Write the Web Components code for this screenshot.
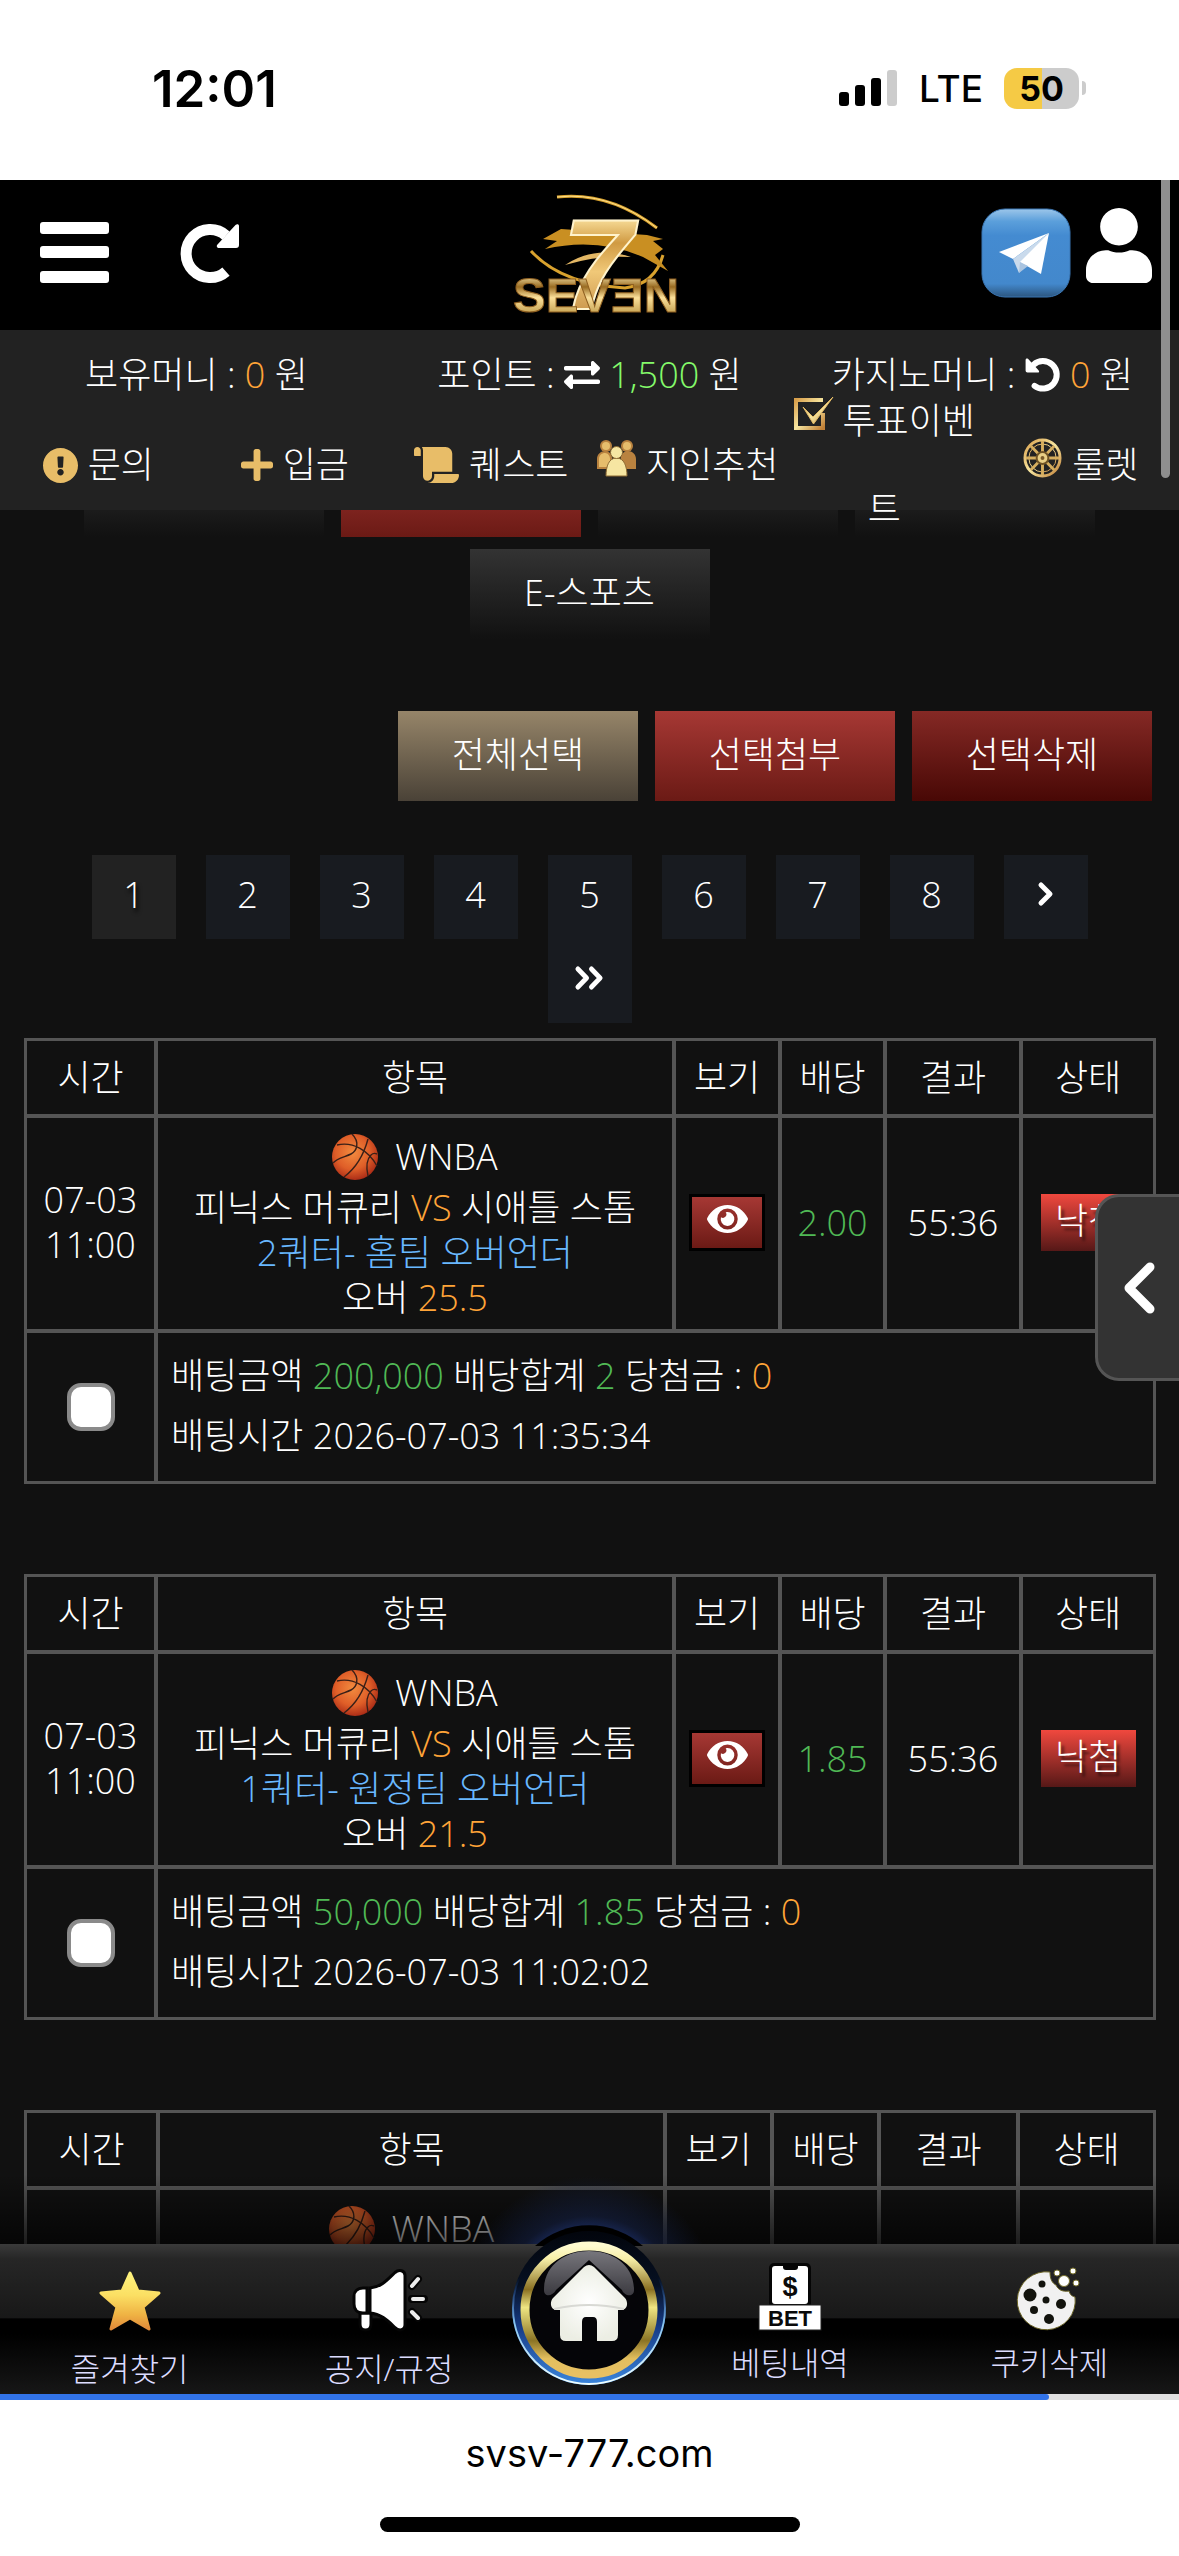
<!DOCTYPE html>
<html lang="ko">
<head>
<meta charset="utf-8">
<meta name="viewport" content="width=device-width, initial-scale=1">
<title>SEVEN</title>
<style>
  html, body { margin: 0; background: #fff; }
  body {
    font-family: "Open Sans", "Noto Sans CJK KR", sans-serif;
    font-weight: 300; font-size: 36px; color: #fff;
    --line: #555; --page: #111; --bar: #222;
    --amber: #ffa438; --green: #50b955; --sky: #69b8ff;
  }
</style>
</head>
<body>
<app-screen></app-screen>

<script>
const define = (name, html, setup) => {
  const tpl = document.createElement('template');
  tpl.innerHTML = html;
  customElements.define(name, class extends HTMLElement {
    constructor() {
      super();
      this.attachShadow({ mode: 'open' }).append(tpl.content.cloneNode(true));
    }
    connectedCallback() { if (setup) setup(this, this.shadowRoot); }
  });
};

/* ---------- icons ---------- */
const GOLD = `<defs><linearGradient id="g" x1="0" x2="1" y1="0" y2="1"><stop offset="0" stop-color="#d9a04c"/><stop offset=".5" stop-color="#f7e6a0"/><stop offset="1" stop-color="#c07f36"/></linearGradient></defs>`;
const ICONS = {
  bars: ['0 0 69 61', '<g fill="#fff"><rect width="69" height="12" rx="3"/><rect y="24" width="69" height="12" rx="3"/><rect y="49" width="69" height="12" rx="3"/></g>'],
  redo: ['0 0 60 60', '<path d="M45 12.500A24 24 0 1 0 45 48.500" fill="none" stroke="#fff" stroke-width="11"/><path d="M58 3v19a3 3 0 0 1-3 3H38c-2 0-3-2-1.500-3.500l18-19.500C56 .5 58 1 58 3z" fill="#fff"/>'],
  undo: ['0 0 60 60', '<path d="M14 13A23 23 0 1 1 16 48" fill="none" stroke="#fff" stroke-width="10" stroke-linecap="round"/><path d="M1 5v18a3 3 0 0 0 3 3h17c2.500 0 3.500-2 1.500-4L5 3C3 1.500 1 2.500 1 5z" fill="#fff"/>'],
  user: ['0 0 448 512', '<path fill="#fff" d="M224 256c70.7 0 128-57.3 128-128S294.7 0 224 0 96 57.3 96 128s57.3 128 128 128zm89.6 32h-16.7c-22.2 10.2-46.9 16-72.9 16s-50.600-5.800-72.900-16h-16.700C60.200 288 0 348.200 0 422.400V464c0 26.500 21.500 48 48 48h352c26.500 0 48-21.500 48-48v-41.600c0-74.200-60.200-134.400-134.400-134.400z"/>'],
  telegram: ['0 0 90 90', `<defs><linearGradient id="t" x1="0" x2="0" y1="0" y2="1"><stop offset="0" stop-color="#9cc6ea"/><stop offset=".14" stop-color="#5b9fdb"/><stop offset=".3" stop-color="#448bd1"/><stop offset=".85" stop-color="#4388cc"/><stop offset="1" stop-color="#2c567f"/></linearGradient></defs><rect x="1" y="1" width="88" height="88" rx="23" fill="url(#t)" stroke="#3a76b4"/><path d="M68 25L18 44l14 7z" fill="#fff"/><path d="M68 25L32 51l6 14z" fill="#c9daec"/><path d="M68 25L39 54l21 12z" fill="#fff"/><path d="M39 54l-1 11 9-7z" fill="#aac4e0"/>`],
  exchange: ['0 0 512 512', '<path fill="#fff" d="M0 168v-16c0-13.255 10.745-24 24-24h360V80c0-21.367 25.899-32.042 40.971-16.971l80 80c9.372 9.373 9.372 24.569 0 33.941l-80 80C409.956 271.982 384 261.456 384 240v-48H24c-13.255 0-24-10.745-24-24zm488 152H128v-48c0-21.314-25.862-32.080-40.971-16.971l-80 80c-9.372 9.373-9.372 24.569 0 33.941l80 80C102.057 463.997 128 453.437 128 432v-48h360c13.255 0 24-10.745 24-24v-16c0-13.255-10.745-24-24-24z"/>'],
  alert: ['8 8 496 496', '<path fill="#e8bd68" d="M504 256c0 136.997-111.043 248-248 248S8 392.997 8 256C8 119.083 119.043 8 256 8s248 111.083 248 248zm-248 50c-25.405 0-46 20.595-46 46s20.595 46 46 46 46-20.595 46-46-20.595-46-46-46zm-43.673-165.346l7.418 136c.347 6.364 5.609 11.346 11.982 11.346h48.546c6.373 0 11.635-4.982 11.982-11.346l7.418-136c.375-6.874-5.098-12.654-11.982-12.654h-63.383c-6.884 0-12.356 5.780-11.981 12.654z"/>'],
  plus: ['0 32 448 448', '<path fill="#e8bd68" d="M416 208H272V64c0-17.670-14.330-32-32-32h-32c-17.670 0-32 14.330-32 32v144H32c-17.670 0-32 14.330-32 32v32c0 17.670 14.330 32 32 32h144v144c0 17.670 14.330 32 32 32h32c17.670 0 32-14.330 32-32V304h144c17.670 0 32-14.330 32-32v-32c0-17.670-14.330-32-32-32z"/>'],
  scroll: ['0 0 640 512', '<path fill="#e8bd68" d="M48 0C21.530 0 0 21.530 0 48v64c0 8.840 7.160 16 16 16h80V48C96 21.530 74.470 0 48 0zm208 412.570V352h288V96c0-52.940-43.060-96-96-96H111.590C121.740 13.410 128 29.920 128 48v368c0 38.870 34.650 69.650 74.750 63.120C234.220 474 256 444.460 256 412.570zM288 384v32c0 52.930-43.060 96-96 96h336c61.860 0 112-50.140 112-112 0-8.840-7.160-16-16-16H288z"/>'],
  group: ['0 0 39 36', GOLD + '<g fill="#b9823f"><circle cx="9" cy="6" r="6"/><circle cx="30" cy="6" r="6"/><path d="M0 29V19c0-5 4-8 8-8s7 3 7 7v11zM39 29V19c0-5-4-8-8-8s-7 3-7 7v11z"/></g><g fill="#e6bd6c"><circle cx="9" cy="6" r="4"/><circle cx="30" cy="6" r="4"/><path d="M2 27v-8c0-4 3-6 6-6s5 3 5 6v8z"/></g><g fill="#f6e6a2" stroke="#8d6a33" stroke-width="1"><path d="M9 36c0-10 3-18 10.500-18S30 26 30 36z"/><circle cx="19.500" cy="12.500" r="6"/></g>'],
  vote: ['0 0 39 36', GOLD + '<path d="M29 4H2v28h27V17" fill="none" stroke="url(#g)" stroke-width="4"/><path d="M9 11l10 10L39 1 19.500 28z" fill="url(#g)" stroke="#e4bb66"/>'],
  wheel: ['0 0 40 40', GOLD + '<g fill="none" stroke="url(#g)"><circle cx="20" cy="20" r="18" stroke-width="3"/><circle cx="20" cy="20" r="14" stroke-width="1"/></g><path d="M20 3V37M3 20H37M8 8L32 32M32 8L8 32" stroke="#d6ae5e" stroke-width="3"/><circle cx="20" cy="20" r="6" fill="#e9cf85" stroke="#6f5324" stroke-width="2"/><circle cx="20" cy="20" r="2" fill="#7a5b29"/>'],
  eye: ['0 64 576 384', '<path fill="#fff" d="M572.520 241.400C518.290 135.590 410.930 64 288 64S57.680 135.640 3.480 241.410a32.350 32.350 0 0 0 0 29.190C57.710 376.410 165.070 448 288 448s230.320-71.640 284.520-177.410a32.350 32.350 0 0 0 0-29.190zM288 400a144 144 0 1 1 144-144 143.930 143.930 0 0 1-144 144zm0-240a95.310 95.310 0 0 0-25.310 3.790 47.850 47.850 0 0 1-66.900 66.900A95.780 95.780 0 1 0 288 160z"/>'],
  next: ['0 0 16 24', '<path d="M3 3l9 9-9 9" fill="none" stroke="#fff" stroke-width="5" stroke-linejoin="round" stroke-linecap="round"/>'],
  last: ['0 0 30 24', '<path d="M3 3l9 9-9 9M17 3l9 9-9 9" fill="none" stroke="#fff" stroke-width="5" stroke-linejoin="round" stroke-linecap="round"/>'],
  back: ['0 0 32 52', '<path d="M27 5L6 26l21 21" fill="none" stroke="#fff" stroke-width="9" stroke-linejoin="round" stroke-linecap="round"/>'],
  ball: ['0 0 46 46', '<defs><radialGradient id="b" cx=".45" cy=".4" r=".62"><stop offset="0" stop-color="#f28b3f"/><stop offset=".6" stop-color="#df5e28"/><stop offset="1" stop-color="#a82a16"/></radialGradient></defs><circle cx="23" cy="23" r="23" fill="url(#b)"/><g fill="none" stroke="#3a2018" stroke-width="1.400"><path d="M20 0c8 8 5 17-1 20S5 24 1 29M36 5C32 20 24 34 12 43M5 11c16-4 32 6 40 21M36 42c-2-9-1-17 3-21 2-2 4-2 6-1"/></g>'],
  star: ['0 0 62 60', '<defs><linearGradient id="s" x1="0" x2="0" y1="0" y2="1"><stop offset="0" stop-color="#fff47e"/><stop offset=".4" stop-color="#fbdf63"/><stop offset=".75" stop-color="#efb243"/><stop offset="1" stop-color="#e08a3a"/></linearGradient></defs><path fill="url(#s)" stroke="url(#s)" stroke-width="3" stroke-linejoin="round" d="M31 2l8 18 21 2-16 14 6 22-19-11-19 11 6-22L2 22l21-2z"/>'],
  horn: ['0 0 74 62', '<g stroke="#050505" stroke-width="3"><path d="M8 44h11v11c0 4-2 6-5.500 6S8 59 8 55z" fill="#fff"/><path d="M15 19H11C5 19 2 23 2 27v8c0 5 3 9 9 9h4z" fill="#fff"/><path d="M18 19C30 18 37 9 43 3.500c4-3.500 10-2 10 3v49c0 6-6 7-10 3C37 53 30 45 18 44z" fill="#fff"/></g><path d="M60 17l6-7M60 30h12M60 43l6 6" stroke="#050505" stroke-width="8" stroke-linecap="round"/><path d="M60 17l6-7M61 30h10M60 43l6 6" stroke="#ececec" stroke-width="4" stroke-linecap="round"/>'],
  bet: ['0 0 62 68', '<rect x="10" width="42" height="46" rx="5" fill="#050505"/><rect x="13" y="3" width="36" height="38" rx="3" fill="#fff"/><path d="M24 2h15v2c0 2-1 3-3 3h-9c-2 0-3-1-3-3z" fill="#050505"/><rect y="42" width="62" height="25" fill="#fff" stroke="#222"/><text x="31" y="33" font-family="Liberation Sans" font-weight="700" font-size="27" text-anchor="middle" fill="#0a0a0a">$</text><text x="31" y="63" font-family="Liberation Sans" font-weight="700" font-size="22" text-anchor="middle" fill="#0a0a0a">BET</text>'],
  cookie: ['0 0 64 64', '<path d="M33 5A29 29 0 1 0 58 30c-4-1-5-3-6-6-6 1-11-1-13-6-4-2-6-6-6-13z" fill="#f1f1f1" stroke="#6b6426" stroke-width="1"/><g fill="#fff" stroke="#77702c"><circle cx="47" cy="14" r="5.500"/><circle cx="40" cy="6" r="3"/><circle cx="56" cy="4" r="3"/><circle cx="59" cy="16" r="3"/></g><g fill="#12130d"><circle cx="13" cy="28" r="6.500"/><circle cx="25" cy="17" r="3.500"/><circle cx="29" cy="33" r="3.500"/><circle cx="44" cy="37" r="5"/><circle cx="17" cy="43" r="4"/><circle cx="32" cy="52" r="5"/></g>'],
  home: ['0 0 164 164', `<defs>
    <linearGradient id="o" x1="0" x2="0" y1="0" y2="1"><stop offset="0" stop-color="#02050c"/><stop offset=".35" stop-color="#061022"/><stop offset=".62" stop-color="#163b86"/><stop offset="1" stop-color="#3b86dd"/></linearGradient>
    <linearGradient id="r" x1="0" x2="0" y1="0" y2="1"><stop offset="0" stop-color="#fffbd0"/><stop offset=".1" stop-color="#f8f0a8"/><stop offset=".34" stop-color="#8a7022"/><stop offset=".48" stop-color="#efe682"/><stop offset=".74" stop-color="#8b7425"/><stop offset=".88" stop-color="#e3bf5e"/><stop offset="1" stop-color="#e8c063"/></linearGradient>
    <linearGradient id="e" x1="0" x2="0" y1="0" y2="1"><stop offset=".3" stop-color="#2a66c8" stop-opacity="0"/><stop offset=".6" stop-color="#86c4ee"/><stop offset="1" stop-color="#f0ffff"/></linearGradient>
    <linearGradient id="gl" x1="0" x2="0" y1="0" y2="1"><stop offset="0" stop-color="#77767c"/><stop offset="1" stop-color="#3b3a40"/></linearGradient>
    <radialGradient id="w"><stop offset="0" stop-color="#fff"/><stop offset="1" stop-color="#eceee4"/></radialGradient></defs>
    <path d="M28 20A81 81 0 0 1 136 20z" fill="#000"/><circle cx="82" cy="82" r="77" fill="url(#o)"/><circle cx="82" cy="82" r="76" fill="none" stroke="url(#e)" stroke-width="2"/>
    <circle cx="82" cy="84" r="64" fill="#050508" stroke="url(#r)" stroke-width="9"/>
    <path d="M37 64c0-52 90-52 90 0 0 8-10 6-12 0L82 34 49 64c-3 6-12 8-12 0z" fill="url(#gl)"/>
    <path d="M77 41q5-4 10 0l31 31c4 5 2 12-4 12h-3v25q0 6-6 6H90V96q0-5-4-5h-7q-4 0-4 5v19H59q-6 0-6-6V84h-3c-6 0-8-7-4-12z" fill="url(#w)"/><path d="M47 83q35-8 70 0" stroke="#d8d9d4" stroke-width="2" fill="none"/>`],
  signal: ['0 0 58 36', '<g fill="#000"><rect y="22" width="10" height="14" rx="3"/><rect x="16" y="15" width="10" height="21" rx="3"/><rect x="32" y="8" width="10" height="28" rx="3"/></g><rect x="48" width="10" height="36" rx="3" fill="#ccc"/>'],
  logo: ['0 0 170 124', `<defs>
    <linearGradient id="l7" x1="0" x2="0" y1="0" y2="1"><stop offset=".15" stop-color="#ffe9a8"/><stop offset=".35" stop-color="#d09a42"/><stop offset=".55" stop-color="#f0c878"/><stop offset="1" stop-color="#b57a33"/></linearGradient>
    <linearGradient id="ls" x1="0" x2="0" y1="0" y2="1"><stop offset=".1" stop-color="#fff0b8"/><stop offset=".35" stop-color="#9a6c22"/><stop offset=".55" stop-color="#fbe09a"/><stop offset="1" stop-color="#a8812c"/></linearGradient></defs>
    <g fill="none"><path d="M46 6q52-6 100 31" stroke="#d9a22e" stroke-width="3"/><path d="M46 6q52-6 100 31" stroke="#ffe08a" stroke-width="1"/><path d="M20 60q30 33 94 37 30-4 38-33" stroke="#d9a22e" stroke-width="3"/></g>
    <path d="M32 48l18-10 86 6 16 4-10 2 10 8-8 6 13 16-25-14q-46-20-98-8l12-8z" fill="#c98f22"/><path d="M54 74q30-20 66-8-34-2-66 8z" fill="#e3b765"/>
    <text x="51" y="118" font-family="Liberation Sans" font-style="italic" font-weight="700" font-size="128" fill="url(#l7)" stroke="#fff3cc" stroke-width="2">7</text>
    <text x="2" y="121" font-family="Liberation Sans" font-weight="700" font-size="49" fill="url(#ls)" stroke="#8f5f20" stroke-width="1">SEVƎN</text>`]
};
define('ui-icon', `<style>:host{display:inline-flex;flex:none} svg{display:block;width:100%;height:100%;overflow:visible}</style>`, (el, root) => {
  const [box, body] = ICONS[el.getAttribute('name')];
  const [w, h] = el.getAttribute('size').split(' ');
  el.style.width = w + 'px'; el.style.height = h + 'px';
  root.innerHTML += `<svg viewBox="${box}" preserveAspectRatio="none" aria-hidden="true">${body}</svg>`;
});

/* ---------- phone status bar ---------- */
define('status-bar', `<style>
  :host{display:flex;align-items:center;justify-content:space-between;height:180px;padding:0 93px 4px 152px;box-sizing:border-box;background:#fff;color:#000;font-family:Inter,sans-serif;flex:none}
  .time{font-size:51px;font-weight:600}
  .right{display:flex;align-items:center}
  .net{font-size:37px;font-weight:500;margin:0 21px 0 22px}
  .bat{width:75px;height:41px;border-radius:13px;background:linear-gradient(90deg,#f5ca45 51%,#ccc 51%);font-size:34px;font-weight:700;line-height:41px;text-align:center}
  .nub{width:4px;height:14px;margin-left:3px;border-radius:0 4px 4px 0;background:#ccc}
</style><span class="time">12:01</span><div class="right"><ui-icon name="signal" size="58 36"></ui-icon><span class="net">LTE</span><span class="bat">50</span><i class="nub"></i></div>`);

/* ---------- site header ---------- */
define('site-header', `<style>
  :host{display:flex;align-items:center;justify-content:space-between;height:150px;box-sizing:border-box;background:#000;padding:0 27px 5px;flex:none}
  div{display:flex;align-items:center;flex:1}
  .l{gap:72px;padding-left:13px} .r{justify-content:flex-end;align-items:flex-start;gap:15px}
  button,a{display:flex;border:0;padding:0;background:none}
</style>
<div class="l"><button aria-label="메뉴"><ui-icon name="bars" size="69 61"></ui-icon></button><button aria-label="새로고침"><ui-icon name="redo" size="60 60"></ui-icon></button></div>
<a href="#" aria-label="SEVEN"><ui-icon name="logo" size="170 124"></ui-icon></a>
<div class="r"><a href="#" aria-label="텔레그램"><ui-icon name="telegram" size="90 90"></ui-icon></a><a href="#" aria-label="내 정보"><ui-icon name="user" size="66 75"></ui-icon></a></div>`);

/* ---------- balances and quick links ---------- */
define('info-bar', `<style>
  :host{display:block;position:relative;z-index:2;height:180px;background:var(--bar);flex:none}
  .row{display:flex;height:90px;align-items:center}
  .row>*{flex:1 1 0;text-align:center;line-height:88px;color:#fff;text-decoration:none;white-space:nowrap}
  ui-icon{vertical-align:middle;margin-bottom:6px}
  b{font-weight:inherit;color:var(--amber)} b.g{color:#84fa6a}
  a ui-icon{margin-right:10px}
  a .hi{margin-bottom:20px}
</style>
<div class="row"><span>보유머니 : <b>0</b> 원</span><span>포인트 : <ui-icon name="exchange" size="36 36"></ui-icon> <b class="g">1,500</b> 원</span><span>카지노머니 : <ui-icon name="undo" size="36 36"></ui-icon> <b>0</b> 원</span></div>
<div class="row"><a href="#"><ui-icon name="alert" size="35 35"></ui-icon>문의</a><a href="#"><ui-icon name="plus" size="32 32"></ui-icon>입금</a><a href="#"><ui-icon name="scroll" size="45 36"></ui-icon>퀘스트</a><a href="#"><ui-icon class="hi" name="group" size="39 36"></ui-icon>지인추천</a><a href="#"><ui-icon class="hi" name="vote" size="39 36"></ui-icon>투표이벤<br>트</a><a href="#"><ui-icon class="hi" name="wheel" size="39 40"></ui-icon>룰렛</a></div>`);

/* ---------- gradient buttons ---------- */
define('tone-button', `<style>
  :host{display:block;width:240px;height:90px;--a:#333;--b:#111}
  :host([tone=red]){--a:#a63834;--b:#6b1a15}
  :host([tone=sand]){--a:#968569;--b:#4a4237}
  :host([tone=wine]){--a:#852925;--b:#480805}
  button{display:block;width:100%;height:100%;border:0;padding:0 0 8px;font:inherit;color:#fff;background:linear-gradient(var(--a),var(--b))}
</style><button><slot></slot></button>`);

/* ---------- pager ---------- */
define('page-list', `<style>
  :host{display:flex;flex-wrap:wrap;justify-content:center;column-gap:30px;padding:0 80px;margin-top:54px}
  a{width:84px;height:84px;display:flex;align-items:center;justify-content:center;padding-bottom:6px;box-sizing:border-box;background:#181b20;color:#fff;text-decoration:none}
  a[aria-current]{background:var(--bar);text-shadow:2px 4px 4px #000}
</style>`, (el, root) => {
  let links = '';
  for (let i = 1; i <= 8; i++) links += `<a href="#"${i === 1 ? ' aria-current="page"' : ''}>${i}</a>`;
  root.innerHTML += links + `<a href="#" aria-label="다음"><ui-icon name="next" size="16 24"></ui-icon></a><a href="#" aria-label="마지막"><ui-icon name="last" size="29 24"></ui-icon></a>`;
});

/* ---------- betting slip ---------- */
define('bet-slip', `<style>
  :host{display:block;margin:0 23px 90px 24px;line-height:45px}
  table{width:100%;table-layout:fixed;border-collapse:separate;border-spacing:2px;background:var(--line)}
  th,td{border:1px solid var(--line);background:var(--page);padding:0 0 3px;text-align:center;font-weight:inherit;box-sizing:border-box}
  th{height:75px;padding:0} .game td{height:213px} .sum td{height:150px} .sum .check{padding:0}
  .game .item{padding:0} .game .top{padding-top:10px;vertical-align:top}
  .sum .text{text-align:left;padding-left:13px;line-height:60px}
  .league{display:flex;align-items:flex-start;justify-content:center;gap:17px;height:46px;padding:6px 0 5px}
  b,i,em{font-weight:inherit;font-style:normal}
  b{color:var(--amber)} i{color:var(--sky)} em{color:var(--green)}
  button{display:inline-flex;align-items:flex-start;justify-content:center;vertical-align:middle;width:76px;height:57px;padding:8px 0 0;border:3px solid #000;background:linear-gradient(#a63834,#6b1a15)}
  .state{display:inline-block;width:95px;height:57px;line-height:54px;vertical-align:middle;background:linear-gradient(#f0483e,#561817);text-shadow:3px 4px 3px #0009}
  label{display:flex;justify-content:center}
  input{appearance:none;margin:0;width:48px;height:48px;border:4px solid #8a8a8a;border-radius:14px;background:#fff}
</style>`, (el, root) => {
  const a = n => el.getAttribute(n) || '';
  const cols = a('cols').split(' ').map(w => `<col${w === '*' ? '' : ` style="width:${w}px"`}>`).join('');
  const head = ['시간', '항목', '보기', '배당', '결과', '상태'].map(t => `<th>${t}</th>`).join('');
  const league = `<div class="league"><ui-icon name="ball" size="46 46"></ui-icon><span>WNBA</span></div>`;
  const full = el.hasAttribute('odds');
  const game = full
    ? `<td>${a('date')}<br>${a('time')}</td><td class="item">${league}피닉스 머큐리 <b>VS</b> 시애틀 스톰<br><i>${a('market')}</i><br>오버 <b>${a('mark')}</b></td><td><button aria-label="보기"><ui-icon name="eye" size="41 28"></ui-icon></button></td><td><em>${a('odds')}</em></td><td>${a('score')}</td><td><span class="state">낙첨</span></td>`
    : `<td></td><td class="item top">${league}</td><td></td><td></td><td></td><td></td>`;
  const sum = full ? `<tr class="sum"><td class="check"><label><input type="checkbox" aria-label="선택"></label></td><td class="text" colspan="5">배팅금액 <em>${a('stake')}</em> 배당합계 <em>${a('total')}</em> 당첨금 : <b>0</b><br>배팅시간 ${a('placed')}</td></tr>` : '';
  root.innerHTML += `<table><colgroup>${cols}</colgroup><thead><tr>${head}</tr></thead><tbody><tr class="game">${game}</tr>${sum}</tbody></table>`;
});

/* ---------- bottom navigation ---------- */
define('bottom-nav', `<style>
  :host{display:flex;position:relative;z-index:3;height:150px;flex:none;background:linear-gradient(#3a3a3a 0,#262626 10%,#181818 49%,#000 50%,#000 60%,#171717 100%)}
  :host::before{content:"";position:absolute;left:0;right:0;bottom:100%;height:70px;background:radial-gradient(circle at 50% calc(100% + 62px),#1c2f68 70px,#16234a88 90px,#0000 130px),linear-gradient(#0000,#0004 40%,#000a)}
  a{flex:22;display:flex;flex-direction:column;align-items:center;justify-content:flex-end;color:#dcdcff;text-decoration:none;font-size:32px;line-height:44px;padding-bottom:3px}
  a.up{padding-bottom:9px}
  a span{margin-top:16px} a.up span{margin-top:10px}
  .home{flex:12;position:relative;padding:0}
  .home ui-icon{position:absolute;left:50%;bottom:4px;margin-left:-82px}
</style>
<a href="#"><ui-icon name="star" size="62 60"></ui-icon><span>즐겨찾기</span></a>
<a href="#"><ui-icon name="horn" size="74 62"></ui-icon><span>공지/규정</span></a>
<a href="#" class="home" aria-label="홈"><ui-icon name="home" size="164 164"></ui-icon></a>
<a href="#" class="up"><ui-icon name="bet" size="62 68"></ui-icon><span>베팅내역</span></a>
<a href="#" class="up"><ui-icon name="cookie" size="64 64"></ui-icon><span>쿠키삭제</span></a>`);

/* ---------- browser foot ---------- */
define('browser-foot', `<style>
  :host{display:flex;flex-direction:column;align-items:center;height:162px;flex:none;background:#fff;color:#000;font-family:Inter,sans-serif;font-weight:400}
  .load{width:100%;height:6px;background:#e1e0e0}
  .load i{display:block;width:89%;height:6px;border-radius:0 3px 3px 0;background:#3273e8}
  .url{font-size:38px;line-height:48px;margin-top:29px}
  .grab{width:420px;height:15px;border-radius:8px;background:#000;margin-top:40px}
</style><div class="load"><i></i></div><div class="url">svsv-777.com</div><i class="grab"></i>`);

/* ---------- screen ---------- */
define('app-screen', `<style>
  :host{display:flex;flex-direction:column;height:100vh;position:relative;overflow:hidden;background:var(--page)}
  main{flex:1 1 0;min-height:0;overflow:hidden;position:relative}
  .tabs{display:flex;flex-wrap:wrap;justify-content:center;gap:12px 17px;margin-top:-63px;padding:0 60px}
  .acts{display:flex;justify-content:flex-end;gap:17px;margin:72px 27px 0 0}
  page-list{margin-bottom:15px}
  .drawer{position:absolute;right:-3px;top:684px;width:87px;height:187px;display:flex;align-items:center;justify-content:center;padding:0;background:#333;border:3px solid #555;border-radius:24px 0 0 24px}
  .thumb{position:absolute;z-index:4;right:9px;top:180px;width:9px;height:298px;border-radius:0 0 5px 5px;background:#8f8f8f}
</style>
<status-bar></status-bar><site-header></site-header><info-bar></info-bar>
<main>
  <div class="tabs"><tone-button></tone-button><tone-button tone="red"></tone-button><tone-button></tone-button><tone-button></tone-button><tone-button>E-스포츠</tone-button></div>
  <div class="acts"><tone-button tone="sand">전체선택</tone-button><tone-button tone="red">선택첨부</tone-button><tone-button tone="wine">선택삭제</tone-button></div>
  <page-list></page-list>
  <bet-slip cols="129 * 104 103 134 132" date="07-03" time="11:00" market="2쿼터- 홈팀 오버언더" mark="25.5" odds="2.00" score="55:36" stake="200,000" total="2" placed="2026-07-03 11:35:34"></bet-slip>
  <bet-slip cols="129 * 104 103 134 132" date="07-03" time="11:00" market="1쿼터- 원정팀 오버언더" mark="21.5" odds="1.85" score="55:36" stake="50,000" total="1.85" placed="2026-07-03 11:02:02"></bet-slip>
  <bet-slip cols="131 * 105 105 137 135"></bet-slip>
  <button class="drawer" aria-label="열기"><ui-icon name="back" size="32 52"></ui-icon></button>
</main>
<bottom-nav></bottom-nav><browser-foot></browser-foot>
<i class="thumb"></i>`);
</script>
</body>
</html>
